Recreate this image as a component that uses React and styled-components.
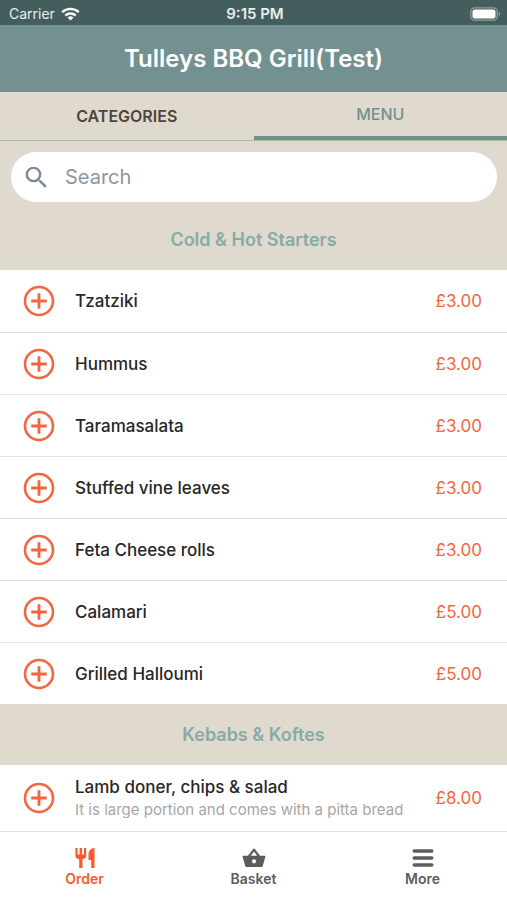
import React, { useState } from 'react';
import styled, { createGlobalStyle } from 'styled-components';
import { MdSearch } from 'react-icons/md';

const GlobalStyle = createGlobalStyle`
  * {
    box-sizing: border-box;
  }

  body {
    margin: 0;
    font-family: Inter, 'Liberation Sans', sans-serif;
    background-color: #fff;
  }

  button {
    font-family: inherit;
    cursor: pointer;
  }
`;

const Screen = styled.div`
  display: flex;
  flex-direction: column;
  height: 100vh;
  overflow: hidden;
`;

// Phone status bar
const StatusBar = styled.div`
  display: grid;
  grid-template-columns: 1fr auto 1fr;
  align-items: center;
  flex-shrink: 0;
  height: 25px;
  padding: 2px 6px 0 9px;
  color: #e8efee;
  background-color: #445e5d;
  font-size: 14px;
  line-height: 16px;
`;

const Carrier = styled.div`
  display: flex;
  align-items: center;
  gap: 6px;
`;

const Clock = styled.span`
  font-size: 15px;
  font-weight: 600;
`;

const BatteryIcon = styled.svg`
  justify-self: end;
`;

const Header = styled.header`
  display: flex;
  align-items: center;
  justify-content: center;
  flex-shrink: 0;
  height: 67px;
  background-color: #739190;
`;

const Title = styled.h1`
  margin: 0;
  color: #fff;
  font-size: 24px;
  font-weight: 600;
  line-height: 28px;
`;

const Tabs = styled.div`
  display: flex;
  flex-shrink: 0;
  height: 49px;
  background-color: #e0d9ce;
  border-bottom: 1px solid #a9bd98;
`;

const Tab = styled.button`
  flex: 1;
  padding: 0;
  border: 0;
  border-bottom: ${(props) => (props.$active ? '4px solid #6f9190' : '0')};
  background: none;
  color: ${(props) => (props.$active ? '#739190' : '#4b4640')};
  font-size: 16px;
  font-weight: ${(props) => (props.$active ? 500 : 600)};
`;

const Content = styled.main`
  flex: 1;
  min-height: 0;
  overflow-y: auto;
  scrollbar-width: none;
  background-color: #e0d9ce;
`;

const SearchBox = styled.label`
  display: flex;
  align-items: center;
  gap: 14px;
  height: 50px;
  margin: 11px 10px 7px 11px;
  padding: 0 11px;
  border-radius: 25px;
  background-color: #fff;
  color: #7d8999;
`;

const SearchInput = styled.input`
  flex: 1;
  min-width: 0;
  padding: 0;
  border: 0;
  outline: 0;
  background: none;
  color: #333;
  font-family: inherit;
  font-size: 20px;

  &::placeholder {
    color: #8d95a3;
    opacity: 1;
  }
`;

const SectionTitle = styled.h2`
  margin: 0;
  color: #87aba6;
  font-size: 18px;
  font-weight: 600;
  line-height: 61px;
  text-align: center;
`;

const ItemList = styled.ul`
  margin: 0;
  padding: 0;
  list-style: none;
  background-color: #fff;
`;

const Item = styled.li`
  display: flex;
  align-items: center;
  min-height: 62px;
  padding: 10px 25px 10px 23px;

  & + & {
    border-top: 1px solid #e2e1dc;
  }
`;

const AddButton = styled.button`
  display: flex;
  margin-right: 20px;
  padding: 0;
  border: 0;
  background: none;
  color: #f2673f;
`;

const ItemText = styled.div`
  flex: 1;
`;

const ItemName = styled.div`
  color: #272727;
  font-size: 17px;
  font-weight: 500;
  line-height: 24px;
`;

const ItemNote = styled.div`
  color: #a6a6a6;
  font-size: 15px;
  line-height: 22px;
`;

const Price = styled.span`
  color: #f2673f;
  font-size: 17px;
`;

const BottomNav = styled.nav`
  display: flex;
  flex-shrink: 0;
  height: 69px;
  border-top: 1px solid #dededc;
  background-color: #fff;
`;

const NavLink = styled.a`
  display: flex;
  flex: 1;
  flex-direction: column;
  align-items: center;
  padding-top: 14px;
  color: ${(props) => (props.$active ? '#fa5a2c' : '#5c5c5c')};
  font-size: 14px;
  font-weight: 600;
  line-height: 18px;
  text-decoration: none;
`;

const sections = [
  {
    title: 'Cold & Hot Starters',
    items: [
      { name: 'Tzatziki', price: 3 },
      { name: 'Hummus', price: 3 },
      { name: 'Taramasalata', price: 3 },
      { name: 'Stuffed vine leaves', price: 3 },
      { name: 'Feta Cheese rolls', price: 3 },
      { name: 'Calamari', price: 5 },
      { name: 'Grilled Halloumi', price: 5 },
    ],
  },
  {
    title: 'Kebabs & Koftes',
    items: [
      {
        name: 'Lamb doner, chips & salad',
        note: 'It is large portion and comes with a pitta bread',
        price: 8,
      },
    ],
  },
];

const WifiIcon = () => (
  <svg width="19" height="14" viewBox="0 0 19 14" fill="none" stroke="#fff" strokeWidth="2.4">
    <path d="M1.2 5.2a12 12 0 0 1 16.6 0" />
    <path d="M4.3 8.5a7.6 7.6 0 0 1 10.4 0" />
    <path d="M9.5 13.6 6.6 10.7a4.2 4.2 0 0 1 5.8 0z" fill="#fff" stroke="none" />
  </svg>
);

const PlusIcon = () => (
  <svg width="32" height="32" viewBox="0 0 32 32" fill="none" stroke="currentColor">
    <circle cx="16" cy="16" r="14" strokeWidth="2.6" />
    <path d="M16 8.2v15.6M8.2 16h15.6" strokeWidth="2.8" />
  </svg>
);

const CutleryIcon = () => (
  <svg width="24" height="24" viewBox="0 0 24 24" fill="currentColor">
    <path d="M2.4 2h2.2v6.6h2V2H9v6.600h2V2h2.200v7.400c0 2-1.300 3.400-3.700 3.900V22H6.200v-8.700c-2.500-.5-3.800-1.900-3.800-3.900z" />
    <path d="M21.500 2v20h-3.300v-8h-2.700V8.500c0-3.700 2.300-6.300 6-6.500z" />
  </svg>
);

const BasketIcon = () => (
  <svg width="24" height="24" viewBox="0 0 24 24">
    <path d="M6.5 11 12 3.600 17.500 11" fill="none" stroke="currentColor" strokeWidth="2.2" strokeLinejoin="round" />
    <path
      fillRule="evenodd"
      fill="currentColor"
      d="M1.300 9.800h21.400c.5 0 .8.400.7.900l-2.600 9c-.2.800-.8 1.300-1.600 1.300H4.800c-.8 0-1.400-.5-1.600-1.300l-2.600-9c-.1-.5.2-.9.7-.9zM12 13.200a2.100 2.100 0 1 0 0 4.200a2.100 2.100 0 0 0 0-4.200z"
    />
  </svg>
);

const MenuIcon = () => (
  <svg width="24" height="24" viewBox="0 0 24 24" stroke="currentColor" strokeWidth="3.4" strokeLinecap="round">
    <path d="M3.2 5h17.6M3.2 12h17.6M3.2 19h17.6" />
  </svg>
);

const App = () => {
  const [tab, setTab] = useState('MENU');
  const [query, setQuery] = useState('');

  return (
    <Screen>
      <GlobalStyle />
      <StatusBar>
        <Carrier>
          Carrier
          <WifiIcon />
        </Carrier>
        <Clock>9:15 PM</Clock>
        <BatteryIcon width="31" height="14" viewBox="0 0 31 14">
          <rect x="0.8" y="0.8" width="26.4" height="12.4" rx="3.6" fill="none" stroke="#8fa09f" strokeWidth="1.2" />
          <rect x="2.5" y="2.5" width="23" height="9" rx="2" fill="#fff" />
          <path d="M28.6 4.8c2 .8 2 3.6 0 4.4z" fill="#8fa09f" />
        </BatteryIcon>
      </StatusBar>
      <Header>
        <Title>Tulleys BBQ Grill(Test)</Title>
      </Header>
      <Tabs role="tablist">
        {['CATEGORIES', 'MENU'].map((name) => (
          <Tab key={name} role="tab" aria-selected={tab === name} $active={tab === name} onClick={() => setTab(name)}>
            {name}
          </Tab>
        ))}
      </Tabs>
      <Content>
        <SearchBox>
          <MdSearch size={29} />
          <SearchInput
            aria-label="Search"
            placeholder="Search"
            value={query}
            onChange={(e) => setQuery(e.target.value)}
          />
        </SearchBox>
        {sections.map((section) => (
          <section key={section.title}>
            <SectionTitle>{section.title}</SectionTitle>
            <ItemList>
              {section.items
                .filter((item) => item.name.toLowerCase().includes(query.toLowerCase()))
                .map((item) => (
                  <Item key={item.name}>
                    <AddButton aria-label={`Add ${item.name}`}>
                      <PlusIcon />
                    </AddButton>
                    <ItemText>
                      <ItemName>{item.name}</ItemName>
                      {item.note && <ItemNote>{item.note}</ItemNote>}
                    </ItemText>
                    <Price>£{item.price.toFixed(2)}</Price>
                  </Item>
                ))}
            </ItemList>
          </section>
        ))}
      </Content>
      <BottomNav>
        <NavLink href="#order" $active>
          <CutleryIcon />
          Order
        </NavLink>
        <NavLink href="#basket">
          <BasketIcon />
          Basket
        </NavLink>
        <NavLink href="#more">
          <MenuIcon />
          More
        </NavLink>
      </BottomNav>
    </Screen>
  );
};

export default App;
